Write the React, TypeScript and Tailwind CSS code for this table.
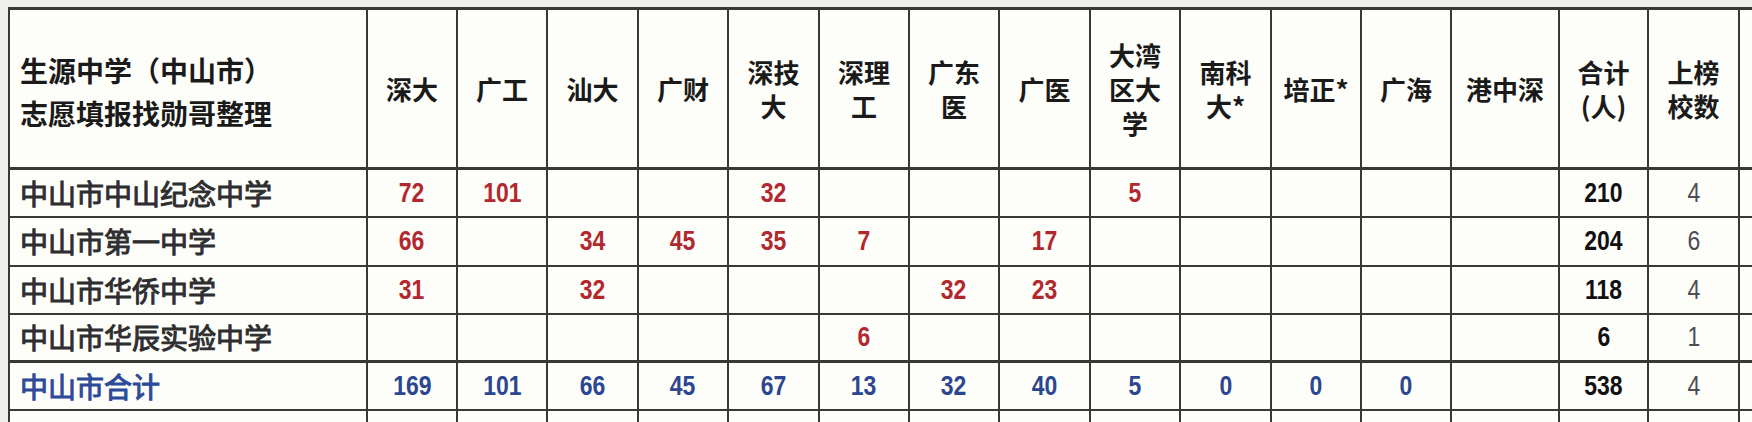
const heads: string[][] = [
  ['深大'],
  ['广工'],
  ['汕大'],
  ['广财'],
  ['深技', '大'],
  ['深理', '工'],
  ['广东', '医'],
  ['广医'],
  ['大湾', '区大', '学'],
  ['南科', '大*'],
  ['培正*'],
  ['广海'],
  ['港中深'],
  ['合计', '(人)'],
  ['上榜', '校数'],
]

const colWidths = [358, 90, 90, 91, 90, 91, 90, 90, 91, 90, 91, 90, 90, 108, 89, 91, 60]

type Row = { name: string; vals: (number | '')[]; total: number; count: number; sum?: boolean }

const rows: Row[] = [
  { name: '中山市中山纪念中学', vals: [72, 101, '', '', 32, '', '', '', 5, '', '', '', ''], total: 210, count: 4 },
  { name: '中山市第一中学', vals: [66, '', 34, 45, 35, 7, '', 17, '', '', '', '', ''], total: 204, count: 6 },
  { name: '中山市华侨中学', vals: [31, '', 32, '', '', '', 32, 23, '', '', '', '', ''], total: 118, count: 4 },
  { name: '中山市华辰实验中学', vals: ['', '', '', '', '', 6, '', '', '', '', '', '', ''], total: 6, count: 1 },
  { name: '中山市合计', vals: [169, 101, 66, 45, 67, 13, 32, 40, 5, 0, 0, 0, ''], total: 538, count: 4, sum: true },
]

const cjk = "font-['Noto_Sans_CJK_SC','Noto_Sans',sans-serif]"
const num = "font-['Liberation_Sans',Arial,sans-serif]"

// Arial Narrow look: Liberation Sans squeezed horizontally
function Narrow({ children }: { children: React.ReactNode }) {
  return <span className="inline-block scale-x-[0.82]">{children}</span>
}

export default function App() {
  return (
    <div className="w-[1752px] h-[422px] overflow-hidden bg-[#efefed] pl-[8px] pt-[7px]">
      <table className="w-[1790px] table-fixed border-collapse bg-[#fdfdf9]">
        <colgroup>
          {colWidths.map((w, i) => (
            <col key={i} style={{ width: w }} />
          ))}
        </colgroup>
        <thead>
          <tr className="h-[160px] border-t-[3px] border-b-[3px] border-[#383838]">
            <th
              className={`border-2 border-[#383838] pl-[10px] text-left align-middle text-[28px] leading-[43px] font-bold text-[#1a1a1a] ${cjk}`}
            >
              <div className="pt-[6px]">生源中学（中山市）</div>
              <div>志愿填报找勋哥整理</div>
            </th>
            {heads.map((lines, i) => (
              <th
                key={i}
                className={`border-2 border-[#383838] text-center align-middle text-[26px] leading-[34px] font-bold text-[#1a1a1a] ${cjk}`}
              >
                {lines.map((l) => (
                  <div key={l}>{l}</div>
                ))}
              </th>
            ))}
            <th className="border-2 border-[#383838]" />
          </tr>
        </thead>
        <tbody>
          {rows.map((r, ri) => (
            <tr
              key={r.name}
              className={`${ri === 1 ? 'h-[49px]' : 'h-[48px]'} ${
                ri === 3 ? 'border-b-[3px]' : ''
              } border-[#383838]`}
            >
              <td
                className={`border-2 border-[#383838] pl-[10px] text-left text-[28px] leading-none font-normal [-webkit-text-stroke:1px_currentColor] ${cjk} ${
                  r.sum ? 'text-[#2c4a98]' : 'text-[#2e2e30]'
                }`}
              >
                {r.name}
              </td>
              {r.vals.map((v, i) => (
                <td
                  key={i}
                  className={`border-2 border-[#383838] text-center text-[28px] leading-none font-bold ${num} ${
                    r.sum ? 'text-[#2c4691]' : 'text-[#b1282f]'
                  }`}
                >
                  <Narrow>{v}</Narrow>
                </td>
              ))}
              <td
                className={`border-2 border-[#383838] text-center text-[28px] leading-none font-bold text-[#111111] ${num}`}
              >
                <Narrow>{r.total}</Narrow>
              </td>
              <td
                className={`border-2 border-[#383838] text-center text-[28px] leading-none text-[#4d4d57] ${num}`}
              >
                <Narrow>{r.count}</Narrow>
              </td>
              <td className="border-2 border-[#383838]" />
            </tr>
          ))}
          <tr className="h-[40px]">
            {colWidths.map((_, i) => (
              <td key={i} className="border-2 border-[#383838]" />
            ))}
          </tr>
        </tbody>
      </table>
    </div>
  )
}
